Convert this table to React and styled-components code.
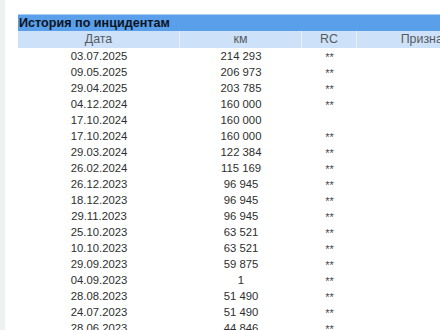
import styled, { createGlobalStyle } from "styled-components";

const GlobalStyle = createGlobalStyle`
  html, body {
    margin: 0;
    padding: 0;
    background: #ffffff;
    overflow: hidden;
  }
  body {
    font-family: "Liberation Sans", Arial, sans-serif;
  }
`;

const Page = styled.div`
  display: flex;
  width: 440px;
  height: 330px;
  overflow: hidden;
`;

// бледная полоска слева
const SideStrip = styled.div`
  flex: 0 0 5px;
  background: #eef2f1;
`;

const Content = styled.div`
  flex: 1;
  padding: 14px 0 0 13px;
  overflow: hidden;
`;

const Panel = styled.div`
  width: 475px;
`;

const TitleBar = styled.div`
  height: 16px;
  line-height: 16px;
  padding-left: 1px;
  background: #5a9fe9;
  border-top: 1px solid #a8ccf2;
  font-size: 12.6px;
  font-weight: bold;
  color: #0b1424;
  white-space: nowrap;
`;

const Row = styled.div`
  display: grid;
  grid-template-columns: 162px 122px 55px 136px;
  height: ${(props) => (props.head ? "17px" : "16px")};
  line-height: ${(props) => (props.head ? "17px" : "16px")};
  background: ${(props) => (props.head ? "#cde1f8" : "transparent")};
  color: ${(props) => (props.head ? "#555b63" : "#2e2e2e")};
  font-size: ${(props) => (props.head ? "12.4px" : "11.3px")};
`;

const Cell = styled.div`
  text-align: center;
  white-space: nowrap;
  overflow: hidden;
  border-right: ${(props) => (props.head ? "1px solid #e8f0fa" : "none")};
`;

const Stars = styled.span`
  color: #4a4a4a;
  font-size: 11px;
  position: relative;
  top: 1px;
`;

const rows = [
  ["03.07.2025", "214 293", true],
  ["09.05.2025", "206 973", true],
  ["29.04.2025", "203 785", true],
  ["04.12.2024", "160 000", true],
  ["17.10.2024", "160 000", false],
  ["17.10.2024", "160 000", true],
  ["29.03.2024", "122 384", true],
  ["26.02.2024", "115 169", true],
  ["26.12.2023", "96 945", true],
  ["18.12.2023", "96 945", true],
  ["29.11.2023", "96 945", true],
  ["25.10.2023", "63 521", true],
  ["10.10.2023", "63 521", true],
  ["29.09.2023", "59 875", true],
  ["04.09.2023", "1", true],
  ["28.08.2023", "51 490", true],
  ["24.07.2023", "51 490", true],
  ["28.06.2023", "44 846", true],
];

function App() {
  return (
    <>
      <GlobalStyle />
      <Page>
        <SideStrip />
        <Content>
          <Panel>
            <TitleBar>История по инцидентам</TitleBar>
            <Row head>
              <Cell head>Дата</Cell>
              <Cell head>км</Cell>
              <Cell head>RC</Cell>
              <Cell head>Признак</Cell>
            </Row>
            {rows.map(([date, km, rc], i) => (
              <Row key={i}>
                <Cell>{date}</Cell>
                <Cell>{km}</Cell>
                <Cell>{rc && <Stars>**</Stars>}</Cell>
                <Cell />
              </Row>
            ))}
          </Panel>
        </Content>
      </Page>
    </>
  );
}

export default App;
